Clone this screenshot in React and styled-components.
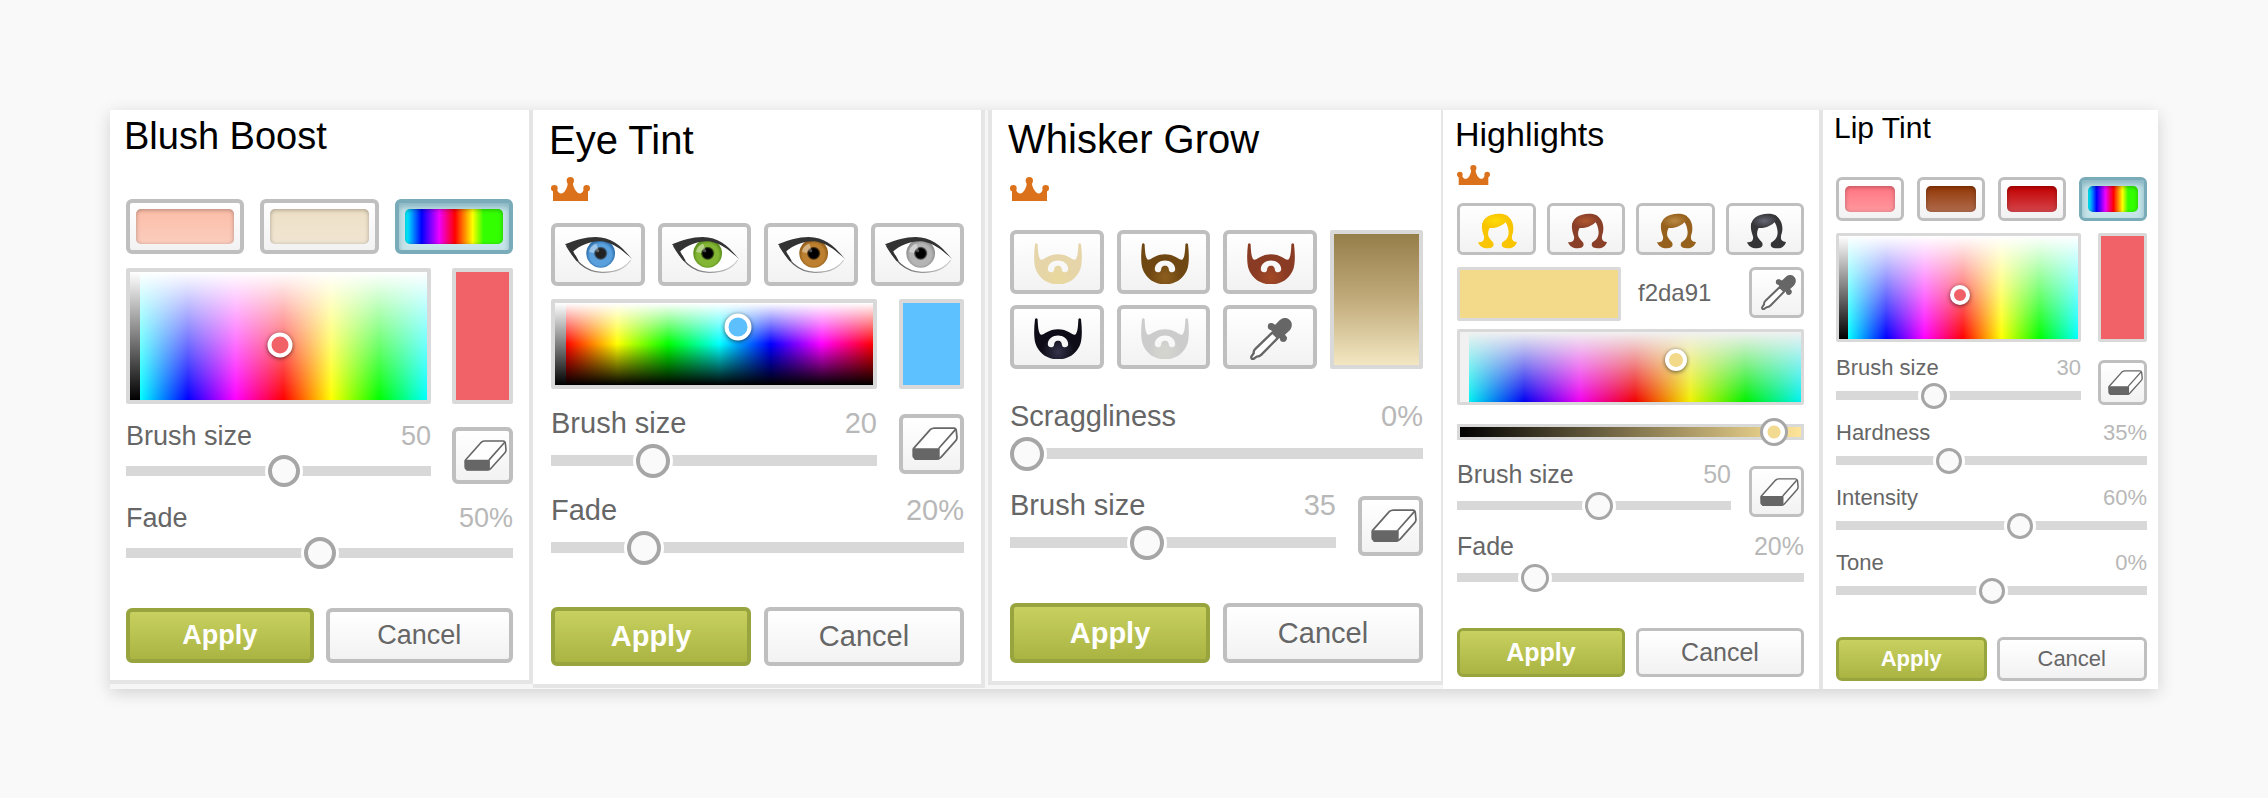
import React, { useId } from "react";
import styled, { createGlobalStyle, css, ThemeProvider } from "styled-components";

const GlobalStyle = createGlobalStyle`
  *, *::before, *::after { box-sizing: border-box; }
  body {
    margin: 0;
    background: #f9f9f9;
    color: #666;
    font-family: "Liberation Sans", Arial, Helvetica, sans-serif;
  }
`;

/* One set of sizes for each panel scale, in pixels. */
const base = {
  title: 40, titleLine: 46, crown: 39,
  font: 29, line: 34, thumb: 34, track: 11, labelGap: 3,
  border: 4, gap: 13, sideGap: 22, side: 65, ring: 27,
  tool: 60, toolTop: 8, eraser: 46, action: 59, strip: 11,
};
const sizes = {
  blush: {
    ...base, title: 38, titleLine: 44, font: 27, line: 32, thumb: 32, track: 10,
    gap: 16, sideGap: 21, side: 61, ring: 25, tool: 57, toolTop: 7, eraser: 43, action: 55, strip: 10,
  },
  eye: base,
  whisker: { ...base, action: 60 },
  highlights: {
    ...base, title: 34, titleLine: 40, crown: 33, font: 25, line: 28, thumb: 28, track: 9,
    border: 3, gap: 11, sideGap: 18, side: 55, ring: 22, tool: 51, toolTop: 6, eraser: 39,
    action: 49, strip: 9,
  },
  lip: {
    ...base, title: 30, titleLine: 34, font: 22, line: 26, thumb: 26, track: 9, labelGap: 1,
    border: 3, sideGap: 17, side: 49, ring: 20, tool: 45, toolTop: 5, eraser: 35,
    action: 44, strip: 9,
  },
};

const Page = styled.main`
  padding: 110px;
`;

const Sheet = styled.div`
  display: grid;
  grid-template-columns: 423fr 455fr 455fr 380fr 335fr;
  background: #f6f6f6;
  box-shadow: 0 4px 16px rgba(0, 0, 0, 0.16);
`;

const Panel = styled.section`
  display: flex;
  flex-direction: column;
  min-width: 0;
  background: #fff;
  border: 0 solid #e5e5e5;
  border-width: ${(p) => p.$edges};
  padding: ${(p) => p.$pad};
  margin: ${(p) => p.$margin || "0"};
`;

const Title = styled.h2`
  margin: 0 0 0 -2px;
  color: #000;
  font-weight: 400;
  font-size: ${(p) => p.theme.title}px;
  line-height: ${(p) => p.theme.titleLine}px;
`;

const Stack = styled.div`
  display: flex;
  flex-direction: column;
  gap: ${(p) => p.$gap}px;
  margin-top: ${(p) => p.$top}px;
`;

const CrownSvg = styled.svg`
  display: block;
  width: ${(p) => p.theme.crown}px;
  margin-top: ${(p) => p.$top}px;
`;

const Presets = styled.div`
  display: grid;
  grid-template-columns: repeat(${(p) => p.$cols}, minmax(0, 1fr));
  grid-auto-rows: ${(p) => p.$row}px;
  gap: ${(p) => p.$rowGap || p.theme.gap}px ${(p) => p.theme.gap}px;
  margin-top: ${(p) => p.$top}px;
`;

const plain = css`
  border: ${(p) => p.theme.border}px solid #bfbfbf;
  background: linear-gradient(#fff, #f2f2f2);
  color: #666;
`;

const Button = styled.button`
  display: flex;
  align-items: center;
  justify-content: center;
  min-width: 0;
  margin: 0;
  padding: 0;
  border-radius: 6px;
  font-family: inherit;
  cursor: pointer;
  ${plain}
`;

const PresetButton = styled(Button)`
  align-items: stretch;
  padding: 6px;
  ${(p) => p.$selected && css`
    border-color: #7aabb9;
    background: #c7e5ea;
    box-shadow: inset 0 4px 6px rgba(70, 130, 150, 0.5);
  `}
`;

const Chip = styled.span`
  flex: 1;
  border-radius: 5px;
  background: ${(p) => p.$fill};
  box-shadow: inset 0 1px 4px rgba(0, 0, 0, 0.3);
`;

const IconButton = styled(Button)`
  padding: ${(p) => p.$drop || 0}px 0 0 ${(p) => p.$shift || 3}px;
`;

const ToolButton = styled(IconButton)`
  flex: none;
  width: ${(p) => p.theme.side}px;
  height: ${(p) => p.theme.tool}px;
  margin-top: ${(p) => p.$top || 0}px;
`;

const Row = styled.div`
  display: flex;
  align-items: flex-start;
  gap: ${(p) => p.theme.sideGap}px;
`;

const PickerRow = styled(Row)`
  align-items: stretch;
  height: ${(p) => p.$height}px;
  margin-top: ${(p) => p.$top}px;
`;

const Picker = styled.div`
  position: relative;
  display: flex;
  flex: 1;
  min-width: 0;
  border: ${(p) => p.theme.border}px solid #d9d9d9;
  border-radius: 2px;
`;

const GreyStrip = styled.div`
  flex: none;
  width: ${(p) => p.theme.strip}px;
  background: ${(p) => p.$fill};
`;

const HueField = styled.div`
  flex: 1;
  background: ${(p) => p.$fill};
`;

const Ring = styled.span`
  position: absolute;
  width: ${(p) => p.theme.ring}px;
  height: ${(p) => p.theme.ring}px;
  border: 4px solid #fff;
  border-radius: 50%;
  transform: translate(-50%, -50%);
  box-shadow: 0 1px 4px rgba(0, 0, 0, 0.6);
`;

const Swatch = styled.div`
  flex: none;
  width: ${(p) => p.$width || `${p.theme.side}px`};
  border: ${(p) => p.theme.border}px solid #d9d9d9;
  border-radius: 2px;
  background: ${(p) => p.$fill};
`;

const TallSwatch = styled(Swatch)`
  grid-column: 4;
  grid-row: 1 / span 2;
  width: auto;
`;

const Field = styled.div`
  flex: 1;
  min-width: 0;
`;

const FieldHead = styled.div`
  display: flex;
  justify-content: space-between;
  margin-bottom: ${(p) => p.theme.labelGap}px;
  font-size: ${(p) => p.theme.font}px;
  line-height: ${(p) => p.theme.line}px;
`;

const Value = styled.output`
  color: #b8b8b8;
`;

const Range = styled.input.attrs({ type: "range", min: 0, max: 100 })`
  appearance: none;
  display: block;
  width: 100%;
  height: ${(p) => p.theme.thumb}px;
  margin: 0;
  background: none;

  &::-webkit-slider-runnable-track {
    height: ${(p) => p.theme.track}px;
    background: #d8d8d8;
  }

  &::-webkit-slider-thumb {
    appearance: none;
    width: ${(p) => p.theme.thumb}px;
    height: ${(p) => p.theme.thumb}px;
    margin-top: ${(p) => Math.round((p.theme.track - p.theme.thumb) / 2)}px;
    border: ${(p) => p.theme.border}px solid #a6a6a6;
    border-radius: 50%;
    background: #fafafa;
    box-shadow: 0 0 0 3px #fff;
  }
`;

const ToneRange = styled(Range)`
  margin-top: 13px;

  &::-webkit-slider-runnable-track {
    height: 16px;
    border: 3px solid #d9d9d9;
    background: linear-gradient(to right, #000, #ffe599);
  }

  &::-webkit-slider-thumb {
    margin-top: -9px;
    background: radial-gradient(circle, #f2da91 6px, #fff 7px);
    box-shadow: none;
  }
`;

const HexRow = styled.div`
  display: flex;
  align-items: flex-start;
  height: 54px;
  margin-top: 12px;

  ${Swatch} {
    height: 100%;
  }
`;

const HexInput = styled.input`
  flex: 1;
  min-width: 0;
  height: 51px;
  padding: 0 0 0 17px;
  border: 0;
  background: none;
  color: #666;
  font-family: inherit;
  font-size: 24px;
`;

const Actions = styled.div`
  display: grid;
  grid-template-columns: 1fr 1fr;
  grid-auto-rows: ${(p) => p.theme.action}px;
  gap: ${(p) => Math.min(p.theme.gap, p.$gap || 13)}px;
  margin-top: ${(p) => p.$top}px;
`;

const ActionButton = styled(Button)`
  font-size: ${(p) => p.theme.font}px;
  ${(p) => p.$primary && css`
    border-color: #98a43e;
    background: linear-gradient(#c8d15f, #aab442);
    color: #fff;
    font-weight: 700;
  `}
`;

function Crown({ top }) {
  return (
    <CrownSvg $top={top} viewBox="0 0 117 72" fill="#db721b" role="img" aria-label="Premium">
      <circle cx="58" cy="11" r="11" />
      <circle cx="10" cy="34" r="10" />
      <circle cx="107" cy="34" r="10" />
      <path d="M6 72V36L18 38C21 48 30 52 37 47C44 42 49 32 51 16H65C67 32 73 42 80 47C87 52 95 48 98 38L111 36V72Z" />
    </CrownSvg>
  );
}

function Eraser({ width }) {
  return (
    <svg width={width} viewBox="-1 0 132 95" aria-hidden="true">
      <path d="M3 62L52 7Q57 3 63 3H119Q125 3 126 10L128 30Q128 36 124 40L82 87Q78 92 72 92H8Z" fill="#fff" stroke="#666" strokeWidth="5" strokeLinejoin="round" />
      <path d="M0 66Q0 61 6 61H76V93H12Q0 93 0 82Z" fill="#666" />
      <path d="M76 61L124 7M76 61V91" fill="none" stroke="#666" strokeWidth="5" />
    </svg>
  );
}

function Dropper({ width }) {
  return (
    <svg width={width} viewBox="0 0 125 125" aria-hidden="true">
      <path d="M67 43L83 59L34 109Q28 115 20 115L10 122Q3 123 4 115L11 105Q10 97 16 92Z" fill="#fff" stroke="#666" strokeWidth="7" strokeLinejoin="round" />
      <path d="M55 29Q52 16 65 16L75 20L88 7C98 -3 112 -2 119 7C127 15 126 29 117 38L104 50L110 57Q110 69 98 70Z" fill="#666" />
      <circle cx="99" cy="61" r="10" fill="#666" />
      <circle cx="63" cy="25" r="10" fill="#666" />
    </svg>
  );
}

function Eye({ light, dark, pupil }) {
  const id = useId();
  return (
    <svg width="68" viewBox="0 0 204 114" aria-hidden="true">
      <defs>
        <radialGradient id={id} cx="50%" cy="55%" r="50%">
          <stop offset="0.35" stopColor={light} />
          <stop offset="0.75" stopColor={light} />
          <stop offset="1" stopColor={dark} />
        </radialGradient>
        <radialGradient id={`${id}-pupil`}>
          <stop offset="0.7" stopColor={pupil} />
          <stop offset="1" stopColor={pupil} stopOpacity="0.3" />
        </radialGradient>
        <linearGradient id={`${id}-line`} x1="0" x2="1">
          <stop offset="0" stopColor="#333" />
          <stop offset="0.45" stopColor="#888" />
          <stop offset="1" stopColor="#d0d0d0" />
        </linearGradient>
      </defs>
      <path d="M8 28C36 10 70 8 104 12C150 14 174 44 199 70C176 100 140 110 106 108C58 104 30 68 8 28Z" fill="#fff" />
      <circle cx="107" cy="52" r="43" fill={`url(#${id})`} />
      <circle cx="107" cy="52" r="20" fill={`url(#${id}-pupil)`} />
      <path d="M72 48C74 34 83 25 94 23L99 38C93 40 89 44 87 51Z" fill="#fff" opacity="0.4" />
      <circle cx="98" cy="44" r="5" fill="#fff" opacity="0.3" />
      <path d="M5 30C30 72 58 108 110 109C150 110 180 98 197 72" fill="none" stroke={`url(#${id}-line)`} strokeWidth="4" />
      <path d="M5 30C14 46 24 62 36 76L41 74C32 58 26 50 24 44Z" fill="#333" />
      <path d="M0 25C34 12 60 3 92 3C142 3 172 34 202 70C172 42 150 24 118 17C84 12 48 26 22 48Z" fill="#333" />
    </svg>
  );
}

function Beard({ color, glow }) {
  const id = useId();
  return (
    <svg width="48" viewBox="0 0 146 127" aria-hidden="true">
      <radialGradient id={id} gradientUnits="userSpaceOnUse" cx="73" cy="104" r="50">
        <stop offset="0" stopColor={glow} />
        <stop offset="1" stopColor={color} />
      </radialGradient>
      <path
        fill={`url(#${id})`}
        fillRule="evenodd"
        d="M3 4Q7 -2 11 4C12 24 13 44 20 50C27 55 42 34 73 34C104 34 119 55 126 50C133 44 134 24 135 4Q139 -2 143 4C146 30 147 56 142 76C132 108 104 126 73 126C42 126 14 108 4 76C-1 56 0 30 3 4ZM42 80C42 92 60 92 61 82C62 74 64 69 73 69C82 69 84 74 85 82C86 92 104 92 104 80C104 62 88 53 73 53C58 53 42 62 42 80Z"
      />
    </svg>
  );
}

function Hair({ color, glow }) {
  const id = useId();
  return (
    <svg width="39" viewBox="0 0 116 106" aria-hidden="true">
      <radialGradient id={id} cx="50%" cy="50%" r="50%">
        <stop offset="0" stopColor={glow} />
        <stop offset="1" stopColor={color} />
      </radialGradient>
      <path fill={color} d="M13 30C9 44 14 58 18 70C20 84 10 89 0 86C4 100 18 106 30 105C44 105 49 98 45 88C38 80 30 74 30 62C30 52 34 46 38 38Z" />
      <path fill={color} d="M80 6C104 14 108 42 104 58C98 74 100 86 116 86C112 100 100 106 88 105C72 105 68 98 72 88C84 80 92 72 91 55C90 42 86 30 78 22Z" />
      <path fill={`url(#${id})`} d="M13 40C9 18 34 2 62 2C80 2 90 7 91 14C78 42 42 50 20 42Q16 38 13 40Z" />
    </svg>
  );
}

const HUES_FROM_CYAN = "#0ff, #00f, #f0f, #f00, #ff0, #0f0, #0ff";
const FIELDS = {
  light: {
    strip: "linear-gradient(#fff, #000)",
    hue: `linear-gradient(#fff, rgba(255, 255, 255, 0)), linear-gradient(to right, ${HUES_FROM_CYAN})`,
  },
  full: {
    strip: "linear-gradient(#fff, #000)",
    hue: "linear-gradient(#fff, rgba(255, 255, 255, 0) 50%, rgba(0, 0, 0, 0) 50%, #000), linear-gradient(to right, #f00, #ff0, #0f0, #0ff, #00f, #f0f, #f00)",
  },
  soft: {
    strip: "#f1f1f1",
    hue: "linear-gradient(#f1f1f1, rgba(241, 241, 241, 0)), linear-gradient(to right, #00f1f1, #0000f1, #f100f1, #f10000, #f1f100, #00f100, #00f1f1)",
  },
};
const RAINBOW =
  "linear-gradient(to right, #0ef 2%, #00f 17%, #e0f 35%, #f00 51%, #ff0 69%, #3f0 80%)";

function ColorPicker({ field, x, y, color }) {
  return (
    <Picker role="group" aria-label="Colour picker">
      <GreyStrip $fill={FIELDS[field].strip} />
      <HueField $fill={FIELDS[field].hue} />
      <Ring style={{ left: `${x}%`, top: `${y}%`, background: color }} />
    </Picker>
  );
}

function SliderField({ label, value, at }) {
  const id = useId();
  return (
    <Field>
      <FieldHead>
        <label htmlFor={id}>{label}</label>
        <Value htmlFor={id}>{value}</Value>
      </FieldHead>
      <Range id={id} defaultValue={at} />
    </Field>
  );
}

function BrushRow({ value, at, size }) {
  return (
    <Row>
      <SliderField label="Brush size" value={value} at={at} />
      <ToolButton type="button" aria-label="Eraser" $shift={6} $top={size.toolTop}>
        <Eraser width={size.eraser} />
      </ToolButton>
    </Row>
  );
}

function ApplyCancel({ top, gap }) {
  return (
    <Actions $top={top} $gap={gap}>
      <ActionButton type="button" $primary>Apply</ActionButton>
      <ActionButton type="button">Cancel</ActionButton>
    </Actions>
  );
}

function ChipPreset({ name, fill, selected }) {
  return (
    <PresetButton type="button" aria-label={name} aria-pressed={!!selected} $selected={selected}>
      <Chip $fill={fill} />
    </PresetButton>
  );
}

function BlushBoost() {
  return (
    <ThemeProvider theme={sizes.blush}>
      <Panel $edges="0 4px 4px 0" $pad="4px 16px 16px" $margin="0 0 5px">
        <Title>Blush Boost</Title>
        <Presets $cols={3} $row={55} $top={41}>
          <ChipPreset name="Peach" fill="linear-gradient(#fbbda8, #fccdbd)" />
          <ChipPreset name="Sand" fill="linear-gradient(#eee0c6, #f0e5d2)" />
          <ChipPreset name="Custom" fill={RAINBOW} selected />
        </Presets>
        <PickerRow $height={136} $top={14}>
          <ColorPicker field="light" x={50.6} y={57.3} color="#f06268" />
          <Swatch $fill="#f06268" />
        </PickerRow>
        <Stack $gap={15} $top={16}>
          <BrushRow value="50" at={52} size={sizes.blush} />
          <SliderField label="Fade" value="50%" at={50} />
        </Stack>
        <ApplyCancel top={39} gap={12} />
      </Panel>
    </ThemeProvider>
  );
}

const EYES = [
  ["Blue", "#5aa0dc", "#2f6fae", "#222"],
  ["Green", "#83b634", "#5c8f1a", "#000"],
  ["Brown", "#bd8030", "#95601a", "#000"],
  ["Grey", "#b4b4b4", "#8f8f8f", "#000"],
];

function EyeTint() {
  return (
    <ThemeProvider theme={sizes.eye}>
      <Panel $edges="0 4px 4px 0" $pad="7px 17px 17px 18px" $margin="0 3px 1px 0">
        <Title>Eye Tint</Title>
        <Crown top={14} />
        <Presets $cols={4} $row={63} $top={22}>
          {EYES.map(([name, light, dark, pupil]) => (
            <IconButton key={name} type="button" aria-label={name}>
              <Eye light={light} dark={dark} pupil={pupil} />
            </IconButton>
          ))}
        </Presets>
        <PickerRow $height={90} $top={13}>
          <ColorPicker field="full" x={57.5} y={29} color="#5ebffd" />
          <Swatch $fill="#5ec1ff" />
        </PickerRow>
        <Stack $gap={16} $top={17}>
          <BrushRow value="20" at={29} size={sizes.eye} />
          <SliderField label="Fade" value="20%" at={20} />
        </Stack>
        <ApplyCancel top={43} />
      </Panel>
    </ThemeProvider>
  );
}

const BEARDS = [
  ["Blond", "#e5d5a8", "#ead99c"],
  ["Brown", "#6f4712", "#8d5f1e"],
  ["Auburn", "#8a3b24", "#a34a26"],
  ["Black", "#0e0d17", "#34334a"],
  ["White", "#cccccc", "#d6d6d0"],
];

function WhiskerGrow() {
  return (
    <ThemeProvider theme={sizes.whisker}>
      <Panel $edges="0 2px 4px 4px" $pad="6px 18px 18px" $margin="0 0 4px">
        <Title>Whisker Grow</Title>
        <Crown top={15} />
        <Presets $cols={4} $row={64} $rowGap={11} $top={29}>
          {BEARDS.map(([name, color, glow]) => (
            <IconButton key={name} type="button" aria-label={name} $drop={3}>
              <Beard color={color} glow={glow} />
            </IconButton>
          ))}
          <IconButton type="button" aria-label="Pick colour" $drop={3}>
            <Dropper width={42} />
          </IconButton>
          <TallSwatch $fill="linear-gradient(#967e4a, #c1ab7b 50%, #f3e7c2)" />
        </Presets>
        <Stack $gap={18} $top={30}>
          <SliderField label="Scraggliness" value="0%" at={0} />
          <BrushRow value="35" at={41} size={sizes.whisker} />
        </Stack>
        <ApplyCancel top={44} />
      </Panel>
    </ThemeProvider>
  );
}

const HAIRS = [
  ["Blond", "#f9c500", "#fedb08"],
  ["Red", "#8a3f29", "#b1582f"],
  ["Brown", "#96611d", "#b98a43"],
  ["Black", "#353537", "#666876"],
];

function Highlights() {
  return (
    <ThemeProvider theme={sizes.highlights}>
      <Panel $edges="0 4px 0 0" $pad="4px 15px 11px 14px">
        <Title>Highlights</Title>
        <Crown top={11} />
        <Presets $cols={4} $row={52} $top={18}>
          {HAIRS.map(([name, color, glow]) => (
            <IconButton key={name} type="button" aria-label={name} $drop={3}>
              <Hair color={color} glow={glow} />
            </IconButton>
          ))}
        </Presets>
        <HexRow>
          <Swatch $fill="#f2da8a" $width="164px" />
          <HexInput type="text" aria-label="Hex colour" defaultValue="f2da91" />
          <ToolButton type="button" aria-label="Pick colour">
            <Dropper width={35} />
          </ToolButton>
        </HexRow>
        <PickerRow $height={76} $top={8}>
          <ColorPicker field="soft" x={63.4} y={39.6} color="#f2da8a" />
        </PickerRow>
        <ToneRange aria-label="Lightness" defaultValue={96} />
        <Stack $gap={13} $top={14}>
          <BrushRow value="50" at={52} size={sizes.highlights} />
          <SliderField label="Fade" value="20%" at={20} />
        </Stack>
        <ApplyCancel top={37} />
      </Panel>
    </ThemeProvider>
  );
}

function LipTint() {
  return (
    <ThemeProvider theme={sizes.lip}>
      <Panel $edges="0" $pad="1px 11px 7px 13px">
        <Title>Lip Tint</Title>
        <Presets $cols={4} $row={44} $top={32}>
          <ChipPreset name="Pink" fill="linear-gradient(#ff7480, #ff989f)" />
          <ChipPreset name="Brown" fill="linear-gradient(#923706, #b06b4c)" />
          <ChipPreset name="Red" fill="linear-gradient(#c20000, #d4454b)" />
          <ChipPreset name="Custom" fill={RAINBOW} selected />
        </Presets>
        <PickerRow $height={109} $top={12}>
          <ColorPicker field="light" x={50.7} y={57.3} color="#f06268" />
          <Swatch $fill="#f06268" />
        </PickerRow>
        <Stack $gap={12} $top={13}>
          <BrushRow value="30" at={39} size={sizes.lip} />
          <SliderField label="Hardness" value="35%" at={35} />
          <SliderField label="Intensity" value="60%" at={60} />
          <SliderField label="Tone" value="0%" at={50} />
        </Stack>
        <ApplyCancel top={34} gap={10} />
      </Panel>
    </ThemeProvider>
  );
}

export default function App() {
  return (
    <>
      <GlobalStyle />
      <Page>
        <Sheet>
          <BlushBoost />
          <EyeTint />
          <WhiskerGrow />
          <Highlights />
          <LipTint />
        </Sheet>
      </Page>
    </>
  );
}
